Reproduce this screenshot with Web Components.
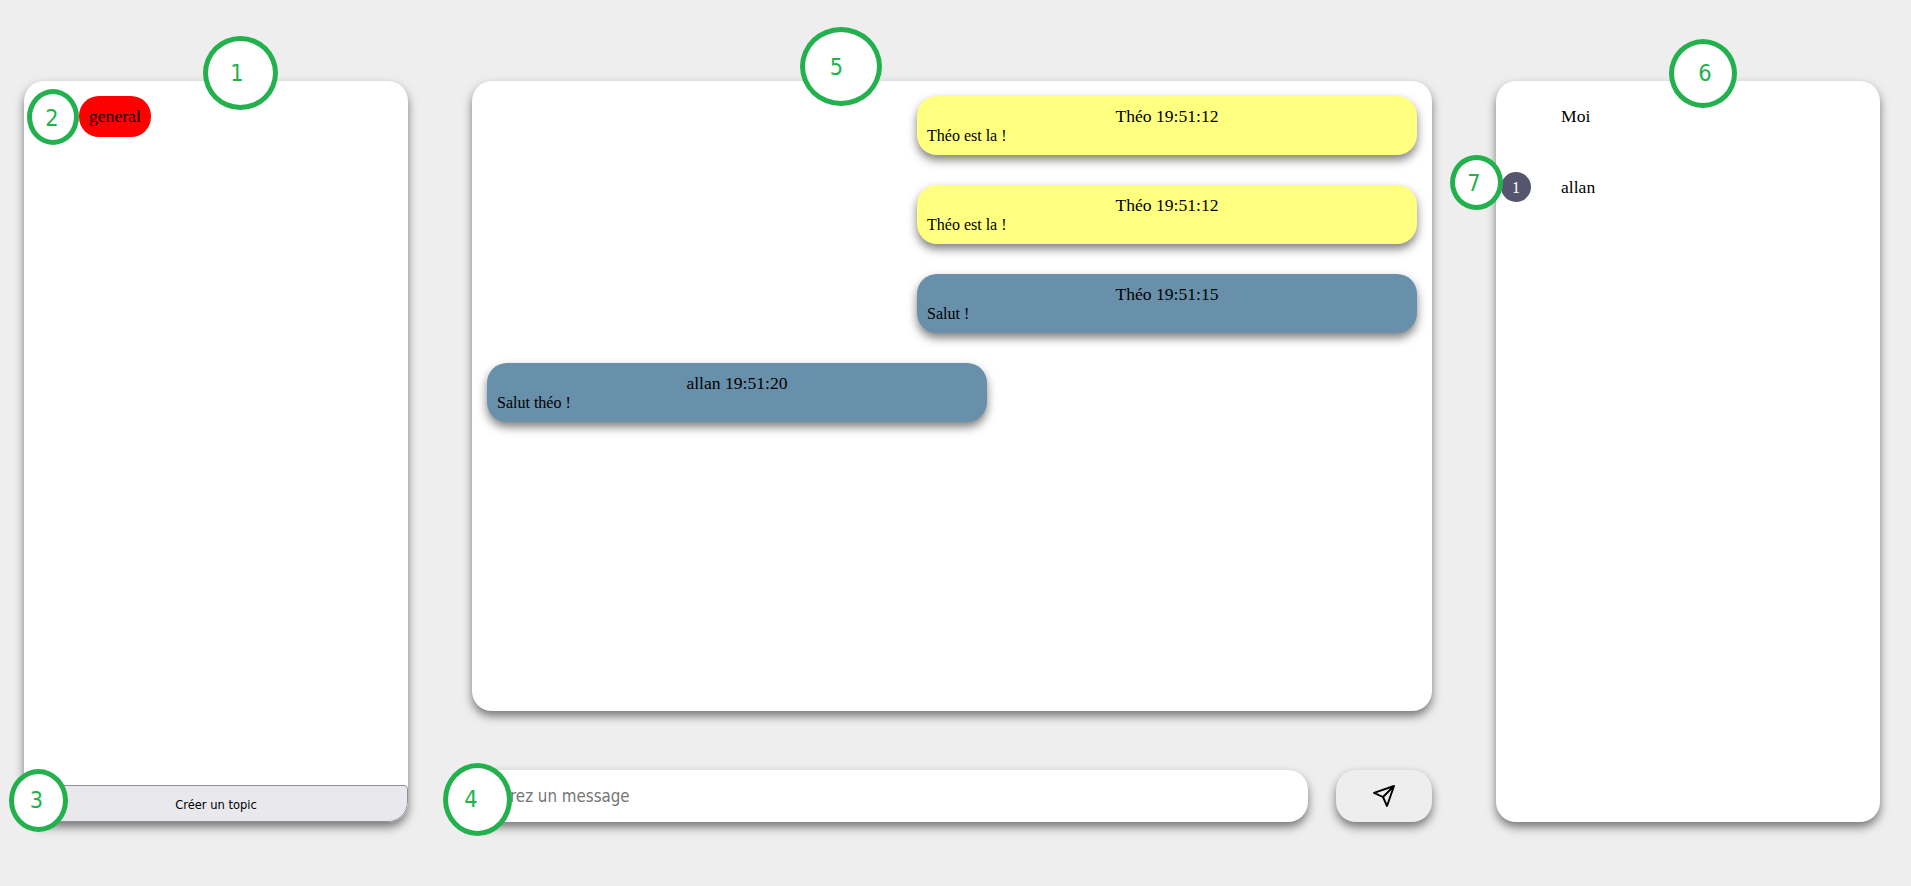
<!DOCTYPE html>
<html lang="fr">
<head>
<meta charset="utf-8">
<title>Chat</title>
<style>
  html, body { margin: 0; height: 100%; }
  body { background: #eee; overflow: hidden; font: 17.6px/20px "Liberation Serif", "Times New Roman", serif; color: #000; }
</style>
</head>
<body>
<chat-app></chat-app>
<script>
const define = (name, html, setup) => {
  const template = document.createElement('template');
  template.innerHTML = html;
  customElements.define(name, class extends HTMLElement {
    constructor() {
      super();
      this.attachShadow({ mode: 'open' }).append(template.content.cloneNode(true));
    }
    connectedCallback() { if (setup) setup(this, this.shadowRoot); }
  });
};

define('chat-panel', `
  <style>
    :host { display: flex; flex-direction: column; box-sizing: border-box; background: #fff; border-radius: 20px; overflow: hidden; box-shadow: 0 5px 10px rgba(0,0,0,.5); }
  </style><slot></slot>`);

define('topic-pill', `
  <style>
    :host { display: block; box-sizing: border-box; width: 72px; height: 41px; padding: 10px; margin: 15px 0 0 55px; border-radius: 20px; background: #f00; }
  </style><slot></slot>`);

define('create-topic', `
  <style>
    :host { display: block; margin-top: auto; }
    button { display: block; box-sizing: border-box; width: 100%; height: 37px; padding: 2px 0 0; border: 1px solid #8f8f9d; border-radius: 4px 4px 20px 20px; background: #e9e9ed; color: #000; font: 12.8px/15px "DejaVu Sans Condensed", "DejaVu Sans", sans-serif; font-stretch: condensed; }
  </style><button><slot></slot></button>`);

define('chat-message', `
  <style>
    :host { display: block; box-sizing: border-box; width: 500px; height: 59px; padding: 10px; border-radius: 20px; background: #ffff80; box-shadow: 0 5px 10px rgba(0,0,0,.5); }
    :host([kind="user"]) { background: #6890aa; }
    :host([own]) { align-self: flex-end; }
    header { text-align: center; line-height: 20px; }
    p { margin: 0; font-size: 16px; line-height: 19px; }
  </style><header><slot name="head"></slot></header><p><slot></slot></p>`);

define('message-list', `
  <style>
    :host { display: flex; flex-direction: column; gap: 30px; padding: 15px; }
  </style><slot></slot>`);

define('message-input', `
  <style>
    :host { display: block; }
    input { box-sizing: border-box; width: 100%; height: 52px; padding: 0 10px 0 13px; border: 0; border-radius: 20px; background: #fff; box-shadow: 0 5px 10px rgba(0,0,0,.5); font: 16.8px "DejaVu Sans Condensed", "DejaVu Sans", sans-serif; font-stretch: condensed; }
    input::placeholder { color: #757575; opacity: 1; }
  </style><input placeholder="Entrez un message">`);

define('send-button', `
  <style>
    :host { display: block; }
    button { display: grid; place-items: center; width: 96px; height: 52px; padding: 0; border: 0; border-radius: 20px; background: #eee; box-shadow: 0 5px 10px rgba(0,0,0,.5); }
    svg { display: block; }
  </style>
  <button aria-label="Envoyer"><svg width="24" height="24" viewBox="0 0 24 24" fill="none" stroke="#000" stroke-width="1.9" stroke-linejoin="round"><path d="M22 2 2 8.9 11 13 15 22ZM11 13 22 2"/></svg></button>`);

define('user-row', `
  <style>
    :host { display: grid; grid-template-columns: 30px 1fr; column-gap: 30px; align-items: center; height: 41px; padding-left: 5px; }
    .badge { width: 30px; height: 30px; border-radius: 50%; background: #55556d; color: #fff; font-size: 16px; line-height: 31px; text-align: center; }
    .badge[hidden] { visibility: hidden; display: block; }
  </style><div class="badge" hidden></div><span><slot></slot></span>`,
  (el, root) => {
    const badge = root.querySelector('.badge');
    badge.textContent = el.getAttribute('unread') || '';
    badge.hidden = !el.hasAttribute('unread');
  });

define('user-list', `
  <style>
    :host { display: flex; flex-direction: column; gap: 30px; padding-top: 14px; }
  </style><slot></slot>`);

/* Numbered callout laid over the page; at = "left top width height", shift = digit offset from the centre. */
define('call-out', `
  <style>
    :host { position: absolute; box-sizing: border-box; display: grid; place-items: center; border: 5px solid #22b14c; border-radius: 50%; background: #fff; color: #22b14c; font: 23.3px/24px "DejaVu Sans Condensed", "DejaVu Sans", sans-serif; font-stretch: condensed; }
    span { display: block; }
  </style><span><slot></slot></span>`,
  (el, root) => {
    const [x, y, w, h] = el.getAttribute('at').split(' ');
    Object.assign(el.style, { left: x + 'px', top: y + 'px', width: w + 'px', height: h + 'px' });
    const [dx, dy] = el.getAttribute('shift').split(' ');
    root.querySelector('span').style.transform = `translate(${dx}px, ${dy}px)`;
  });

define('chat-app', `
  <style>
    :host { display: grid; grid-template-columns: 384px 960px 384px; column-gap: 64px; box-sizing: border-box; height: 886px; padding: 81px 31px 64px 24px; }
    main { display: grid; grid-template-rows: 630px 52px; row-gap: 59px; }
    form { display: grid; grid-template-columns: 1fr 96px; column-gap: 28px; margin: 0; }
  </style>
  <chat-panel><topic-pill>general</topic-pill><create-topic>Créer un topic</create-topic></chat-panel>
  <main>
    <chat-panel><message-list>
      <chat-message own><span slot="head">Théo 19:51:12</span>Théo est la !</chat-message>
      <chat-message own><span slot="head">Théo 19:51:12</span>Théo est la !</chat-message>
      <chat-message own kind="user"><span slot="head">Théo 19:51:15</span>Salut !</chat-message>
      <chat-message kind="user"><span slot="head">allan 19:51:20</span>Salut théo !</chat-message>
    </message-list></chat-panel>
    <form><message-input></message-input><send-button></send-button></form>
  </main>
  <chat-panel><user-list><user-row>Moi</user-row><user-row unread="1">allan</user-row></user-list></chat-panel>
  <call-out at="203 36 75 74" shift="-3.5 0">1</call-out>
  <call-out at="27 89 52 56" shift="-1 1">2</call-out>
  <call-out at="9 769 59 63" shift="-2 -1">3</call-out>
  <call-out at="443 763 69 73" shift="-6.5 -1">4</call-out>
  <call-out at="800 27 82 79" shift="-4.5 0">5</call-out>
  <call-out at="1669 39 68 69" shift="2 -1">6</call-out>
  <call-out at="1450 155 53 55" shift="-2.5 0">7</call-out>`);
</script>
</body>
</html>
